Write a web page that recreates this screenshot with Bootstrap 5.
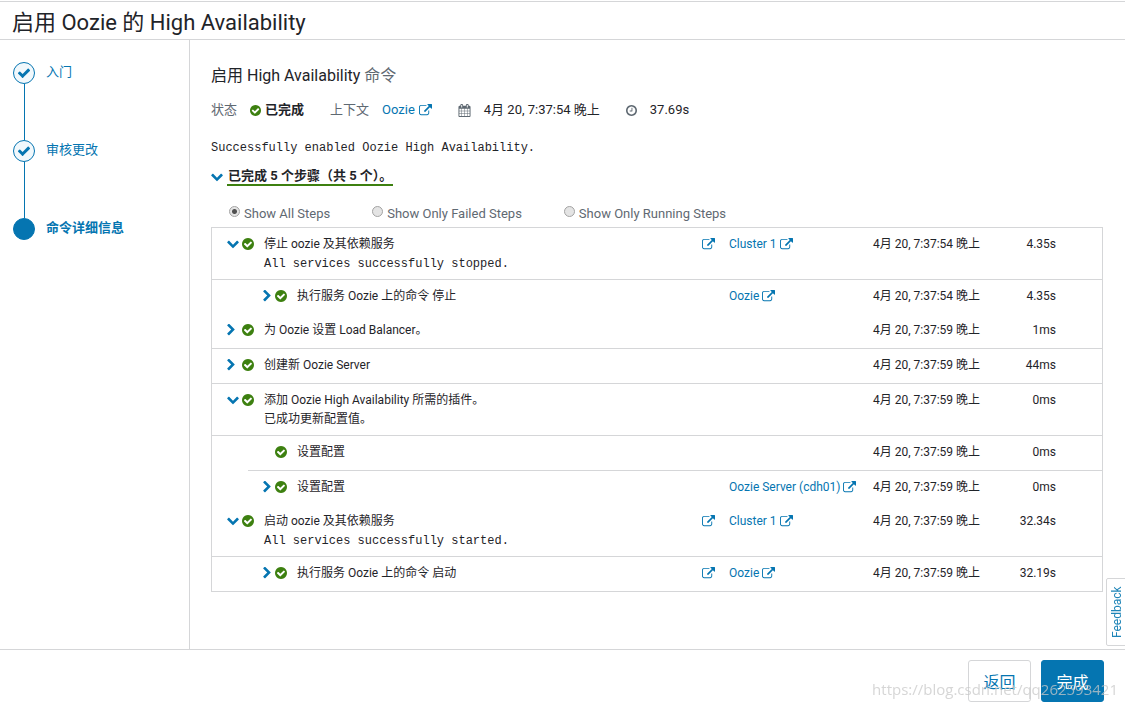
<!DOCTYPE html>
<html lang="zh-CN">
<head>
<meta charset="utf-8">
<meta name="viewport" content="width=device-width, initial-scale=1">
<title>启用 Oozie 的 High Availability</title>
<link href="https://cdn.jsdelivr.net/npm/bootstrap@5.3.0/dist/css/bootstrap.min.css" rel="stylesheet">
<style>
:root { --brand: #0575b1; --ok: #3d8010; --line: #d5d6d8; --ink: #1f2429; --soft: #5f6972; }
body { font-family: Roboto, "Noto Sans CJK SC", sans-serif; font-size: 13px; line-height: 20px; color: var(--ink); }
a, .step-name { color: var(--brand); text-decoration: none; }
svg { fill: currentColor; flex: none; display: block; }
.wizard-head { border-top: 1px solid var(--line); border-bottom: 1px solid var(--line); margin-top: 1px; padding: 6px 12px 1px; }
.wizard-head h1 { font-size: 22px; line-height: 30px; font-weight: 400; margin: 0; }
.wizard-steps { width: 190px; flex: none; border-right: 1px solid var(--line); padding: 22px 13px; }
.wizard-steps li { gap: 11px; }
.step-rail { width: 22px; flex: none; }
.step-dot { width: 22px; height: 22px; border: 1px solid var(--brand); background: #f1f8fc; color: var(--brand); }
.step-dot.current { background: var(--brand); }
.step-line { width: 1px; height: 56px; background: var(--brand); }
.wizard-main { padding: 24px 22px 24px 21px; }
.wizard-main h2 { font-size: 16px; line-height: 24px; font-weight: 400; margin: 0 0 12px; }
.soft { color: var(--soft); }
.ok { color: var(--ok); }
.facts { margin-bottom: 18px; gap: 26px; }
.fact { gap: 13px; }
.mono { font-family: "Liberation Mono", "Noto Sans CJK SC", monospace; font-size: 12px; }
.toggle { background: none; border: 0; padding: 0; color: var(--brand); }
.summary { font-weight: 700; line-height: 16px; border-bottom: 2px solid var(--ok); padding: 1px 1px 0; }
.message { margin: 0 0 9px; }
.filters { margin: 18px 0 3px; padding-left: 18px; gap: 42px; }
.filters label { color: var(--soft); gap: 4px; }
.filters input { appearance: none; width: 11px; height: 11px; margin: 0 0 5px; border: 1px solid #a3a3a3; border-radius: 50%; background: #e4e4e4; }
.filters input:checked { background: radial-gradient(circle, #505050 0 2px, #e4e4e4 3px); }
.steps-table { width: 100%; table-layout: fixed; border: 1px solid var(--line); font-size: 12px; border-collapse: separate; border-spacing: 0; }
.steps-table td { padding: 6px 0 5px; vertical-align: top; height: 34px; }
.steps-table .ruled td { border-bottom: 1px solid var(--line); height: 35px; }
.steps-table .ruled td.open { border-bottom: 0; }
.steps-table td.task { padding-left: 15px; }
.tree { height: 20px; }
.tree .toggle { width: 12px; margin-right: 3px; }
.child .tree .toggle, .no-toggle { width: 8px; margin-right: 4px; }
.tree .label { margin-left: 10px; white-space: nowrap; }
.output { margin-left: 37px; line-height: 20px; }
.ctx { gap: 3px; height: 20px; white-space: nowrap; }
.steps-table .took { text-align: right; padding-right: 46px; }
.wizard-foot { border-top: 1px solid var(--line); padding: 10px 21px 6px; gap: 10px; }
.wizard-foot .btn { width: 63px; height: 42px; padding: 3px 0 0; font-size: 16px; border-radius: 3px; border-color: var(--line); color: var(--brand); background: #fff; }
.wizard-foot .btn-done { background: var(--brand); border-color: var(--brand); color: #fff; }
.feedback { position: fixed; right: -3px; bottom: 62px; width: 22px; height: 68px; writing-mode: vertical-rl; transform: rotate(180deg); border: 1px solid var(--line); border-radius: 0 2px 2px 0; background: #fff; color: #1f85b8; font-size: 12px; line-height: 20px; text-align: center; padding: 0; }
.site-mark { position: fixed; right: 7px; bottom: 9px; font: 15px/20px "Open Sans", sans-serif; color: rgba(200, 200, 200, .75); pointer-events: none; }
</style>
</head>
<body class="d-flex flex-column min-vh-100 bg-white">
<svg width="0" height="0" class="position-absolute" aria-hidden="true">
  <symbol id="i-ok" viewBox="128 128 1536 1536"><path d="M1412 734q0-28-18-46l-91-90q-19-19-45-19t-45 19l-408 407-226-226q-19-19-45-19t-45 19l-91 90q-18 18-18 46 0 27 18 45l362 362q19 19 45 19 27 0 46-19l543-543q18-18 18-45zm252 162q0 209-103 385.500t-279.500 279.500-385.500 103-385.500-103-279.500-279.500-103-385.500 103-385.500 279.500-279.500 385.500-103 385.500 103 279.500 279.500 103 385.500z"/></symbol>
  <symbol id="i-ext" viewBox="0 0 1792 1792"><path d="M1408 928v320q0 119-84.500 203.500t-203.500 84.500h-832q-119 0-203.500-84.500t-84.500-203.500v-832q0-119 84.500-203.500t203.500-84.500h704q14 0 23 9t9 23v64q0 14-9 23t-23 9h-704q-66 0-113 47t-47 113v832q0 66 47 113t113 47h832q66 0 113-47t47-113v-320q0-14 9-23t23-9h64q14 0 23 9t9 23zm384-864v512q0 26-19 45t-45 19-45-19l-176-176-652 652q-10 10-23 10t-23-10l-114-114q-10-10-10-23t10-23l652-652-176-176q-19-19-19-45t19-45 45-19h512q26 0 45 19t19 45z"/></symbol>
  <symbol id="i-cal" viewBox="0 0 1792 1792"><path d="M192 1664h288v-288h-288v288zm352 0h320v-288h-320v288zm-352-352h288v-320h-288v320zm352 0h320v-320h-320v320zm-352-384h288v-288h-288v288zm736 736h320v-288h-320v288zm-384-736h320v-288h-320v288zm768 736h288v-288h-288v288zm-384-352h320v-320h-320v320zm-352-864v-288q0-13-9.500-22.500t-22.500-9.500h-64q-13 0-22.500 9.500t-9.500 22.500v288q0 13 9.500 22.500t22.500 9.500h64q13 0 22.500-9.500t9.500-22.500zm736 864h288v-320h-288v320zm-384-384h320v-288h-320v288zm384 0h288v-288h-288v288zm32-480v-288q0-13-9.500-22.500t-22.500-9.500h-64q-13 0-22.500 9.500t-9.500 22.500v288q0 13 9.500 22.500t22.500 9.500h64q13 0 22.500-9.500t9.500-22.500zm384-64v1280q0 52-38 90t-90 38h-1408q-52 0-90-38t-38-90v-1280q0-52 38-90t90-38h128v-96q0-66 47-113t113-47h64q66 0 113 47t47 113v96h384v-96q0-66 47-113t113-47h64q66 0 113 47t47 113v96h128q52 0 90 38t38 90z"/></symbol>
  <symbol id="i-clock" viewBox="128 128 1536 1536"><path d="M1024 544v448q0 14-9 23t-23 9h-320q-14 0-23-9t-9-23v-64q0-14 9-23t23-9h224v-352q0-14 9-23t23-9h64q14 0 23 9t9 23zm416 352q0-148-73-273t-198-198-273-73-273 73-198 198-73 273 73 273 198 198 273 73 273-73 198-198 73-273zm224 0q0 209-103 385.500t-279.500 279.500-385.500 103-385.500-103-279.500-279.500-103-385.500 103-385.500 279.500-279.500 385.500-103 385.500 103 279.500 279.500 103 385.500z"/></symbol>
  <symbol id="i-check" viewBox="0 0 1792 1792"><path d="M1671 566q0 40-28 68l-724 724-136 136q-28 28-68 28t-68-28l-136-136-362-362q-28-28-28-68t28-68l136-136q28-28 68-28t68 28l294 295 656-657q28-28 68-28t68 28l136 136q28 28 28 68z"/></symbol>
  <symbol id="i-down" viewBox="64 160 1664 1664"><path d="M1683 808l-742 741q-19 19-45 19t-45-19l-742-741q-19-19-19-45.500t19-45.500l166-165q19-19 45-19t45 19l531 531 531-531q19-19 45-19t45 19l166 165q19 19 19 45.500t-19 45.500z"/></symbol>
  <symbol id="i-right" viewBox="330 64 1070 1664"><path d="M1363 877l-742 742q-19 19-45 19t-45-19l-166-166q-19-19-19-45t19-45l531-531-531-531q-19-19-19-45t19-45l166-166q19-19 45-19t45 19l742 742q19 19 19 45t-19 45z"/></symbol>
</svg>

<header class="wizard-head"><h1>启用 Oozie 的 High Availability</h1></header>

<div class="d-flex flex-grow-1">
  <nav class="wizard-steps" aria-label="步骤">
    <ol class="list-unstyled m-0">
      <li class="d-flex">
        <div class="step-rail d-flex flex-column align-items-center">
          <span class="step-dot rounded-circle d-flex align-items-center justify-content-center"><svg width="14" height="14"><use href="#i-check"/></svg></span>
          <span class="step-line"></span>
        </div>
        <a class="step-name" href="#">入门</a>
      </li>
      <li class="d-flex">
        <div class="step-rail d-flex flex-column align-items-center">
          <span class="step-dot rounded-circle d-flex align-items-center justify-content-center"><svg width="14" height="14"><use href="#i-check"/></svg></span>
          <span class="step-line"></span>
        </div>
        <a class="step-name" href="#">审核更改</a>
      </li>
      <li class="d-flex">
        <div class="step-rail"><span class="step-dot current rounded-circle d-block"></span></div>
        <span class="step-name fw-bold" aria-current="step">命令详细信息</span>
      </li>
    </ol>
  </nav>

  <main class="wizard-main flex-grow-1">
    <h2>启用 High Availability <span class="soft">命令</span></h2>

    <div class="facts d-flex align-items-center">
      <div class="fact d-flex align-items-center">
        <span class="soft">状态</span>
        <strong class="d-flex align-items-center gap-1"><svg class="ok" width="11" height="11"><use href="#i-ok"/></svg>已完成</strong>
      </div>
      <div class="fact d-flex align-items-center">
        <span class="soft">上下文</span>
        <a class="d-flex align-items-center gap-1" href="#">Oozie <svg width="13" height="13"><use href="#i-ext"/></svg></a>
      </div>
      <div class="fact d-flex align-items-center">
        <svg class="soft" width="13" height="13"><use href="#i-cal"/></svg>
        <span>4月 20, 7:37:54 晚上</span>
      </div>
      <div class="fact d-flex align-items-center">
        <svg class="soft" width="11" height="11"><use href="#i-clock"/></svg>
        <span>37.69s</span>
      </div>
    </div>

    <p class="mono message">Successfully enabled Oozie High Availability.</p>

    <div class="d-flex align-items-center gap-1">
      <button type="button" class="toggle" aria-label="折叠步骤"><svg width="12" height="12"><use href="#i-down"/></svg></button>
      <span class="summary">已完成 5 个步骤（共 5 个）。</span>
    </div>

    <div class="filters d-flex">
      <label class="d-flex align-items-center"><input type="radio" name="show" checked>Show All Steps</label>
      <label class="d-flex align-items-center"><input type="radio" name="show">Show Only Failed Steps</label>
      <label class="d-flex align-items-center"><input type="radio" name="show">Show Only Running Steps</label>
    </div>

    <table class="steps-table">
      <colgroup><col style="width:36px"><col><col style="width:27px"><col style="width:144px"><col style="width:119px"><col style="width:110px"></colgroup>
      <tbody>
        <tr class="ruled">
          <td class="task" colspan="2">
            <div class="tree d-flex align-items-center"><button type="button" class="toggle" aria-label="折叠"><svg width="12" height="12"><use href="#i-down"/></svg></button><svg class="ok" width="12" height="12"><use href="#i-ok"/></svg><span class="label">停止 oozie 及其依赖服务</span></div>
            <div class="output mono">All services successfully stopped.</div>
          </td>
          <td><a class="ctx d-flex align-items-center" href="#" aria-label="详细信息"><svg width="13" height="13"><use href="#i-ext"/></svg></a></td>
          <td><a class="ctx d-flex align-items-center" href="#">Cluster 1 <svg width="13" height="13"><use href="#i-ext"/></svg></a></td>
          <td>4月 20, 7:37:54 晚上</td><td class="took">4.35s</td>
        </tr>
        <tr class="child">
          <td></td>
          <td class="task"><div class="tree d-flex align-items-center"><button type="button" class="toggle" aria-label="展开"><svg width="8" height="12"><use href="#i-right"/></svg></button><svg class="ok" width="12" height="12"><use href="#i-ok"/></svg><span class="label">执行服务 Oozie 上的命令 停止</span></div></td>
          <td></td>
          <td><a class="ctx d-flex align-items-center" href="#">Oozie <svg width="13" height="13"><use href="#i-ext"/></svg></a></td>
          <td>4月 20, 7:37:54 晚上</td><td class="took">4.35s</td>
        </tr>
        <tr class="ruled">
          <td class="task" colspan="2"><div class="tree d-flex align-items-center"><button type="button" class="toggle" aria-label="展开"><svg width="8" height="12"><use href="#i-right"/></svg></button><svg class="ok" width="12" height="12"><use href="#i-ok"/></svg><span class="label">为 Oozie 设置 Load Balancer。</span></div></td>
          <td></td><td></td><td>4月 20, 7:37:59 晚上</td><td class="took">1ms</td>
        </tr>
        <tr class="ruled">
          <td class="task" colspan="2"><div class="tree d-flex align-items-center"><button type="button" class="toggle" aria-label="展开"><svg width="8" height="12"><use href="#i-right"/></svg></button><svg class="ok" width="12" height="12"><use href="#i-ok"/></svg><span class="label">创建新 Oozie Server</span></div></td>
          <td></td><td></td><td>4月 20, 7:37:59 晚上</td><td class="took">44ms</td>
        </tr>
        <tr class="ruled">
          <td class="task" colspan="2">
            <div class="tree d-flex align-items-center"><button type="button" class="toggle" aria-label="折叠"><svg width="12" height="12"><use href="#i-down"/></svg></button><svg class="ok" width="12" height="12"><use href="#i-ok"/></svg><span class="label">添加 Oozie High Availability 所需的插件。</span></div>
            <div class="output mono">已成功更新配置值。</div>
          </td>
          <td></td><td></td><td>4月 20, 7:37:59 晚上</td><td class="took">0ms</td>
        </tr>
        <tr class="child ruled">
          <td class="open"></td>
          <td class="task"><div class="tree d-flex align-items-center"><span class="no-toggle"></span><svg class="ok" width="12" height="12"><use href="#i-ok"/></svg><span class="label">设置配置</span></div></td>
          <td></td><td></td><td>4月 20, 7:37:59 晚上</td><td class="took">0ms</td>
        </tr>
        <tr class="child">
          <td></td>
          <td class="task"><div class="tree d-flex align-items-center"><button type="button" class="toggle" aria-label="展开"><svg width="8" height="12"><use href="#i-right"/></svg></button><svg class="ok" width="12" height="12"><use href="#i-ok"/></svg><span class="label">设置配置</span></div></td>
          <td></td>
          <td><a class="ctx d-flex align-items-center" href="#">Oozie Server (cdh01) <svg width="13" height="13"><use href="#i-ext"/></svg></a></td>
          <td>4月 20, 7:37:59 晚上</td><td class="took">0ms</td>
        </tr>
        <tr class="ruled">
          <td class="task" colspan="2">
            <div class="tree d-flex align-items-center"><button type="button" class="toggle" aria-label="折叠"><svg width="12" height="12"><use href="#i-down"/></svg></button><svg class="ok" width="12" height="12"><use href="#i-ok"/></svg><span class="label">启动 oozie 及其依赖服务</span></div>
            <div class="output mono">All services successfully started.</div>
          </td>
          <td><a class="ctx d-flex align-items-center" href="#" aria-label="详细信息"><svg width="13" height="13"><use href="#i-ext"/></svg></a></td>
          <td><a class="ctx d-flex align-items-center" href="#">Cluster 1 <svg width="13" height="13"><use href="#i-ext"/></svg></a></td>
          <td>4月 20, 7:37:59 晚上</td><td class="took">32.34s</td>
        </tr>
        <tr class="child">
          <td></td>
          <td class="task"><div class="tree d-flex align-items-center"><button type="button" class="toggle" aria-label="展开"><svg width="8" height="12"><use href="#i-right"/></svg></button><svg class="ok" width="12" height="12"><use href="#i-ok"/></svg><span class="label">执行服务 Oozie 上的命令 启动</span></div></td>
          <td><a class="ctx d-flex align-items-center" href="#" aria-label="详细信息"><svg width="13" height="13"><use href="#i-ext"/></svg></a></td>
          <td><a class="ctx d-flex align-items-center" href="#">Oozie <svg width="13" height="13"><use href="#i-ext"/></svg></a></td>
          <td>4月 20, 7:37:59 晚上</td><td class="took">32.19s</td>
        </tr>
      </tbody>
    </table>
  </main>
</div>

<footer class="wizard-foot d-flex justify-content-end">
  <button type="button" class="btn">返回</button>
  <button type="button" class="btn btn-done">完成</button>
</footer>

<button type="button" class="feedback">Feedback</button>
<div class="site-mark">https://blog.csdn.net/qq262593421</div>
<script src="https://cdn.jsdelivr.net/npm/bootstrap@5.3.0/dist/js/bootstrap.bundle.min.js"></script>
</body>
</html>
